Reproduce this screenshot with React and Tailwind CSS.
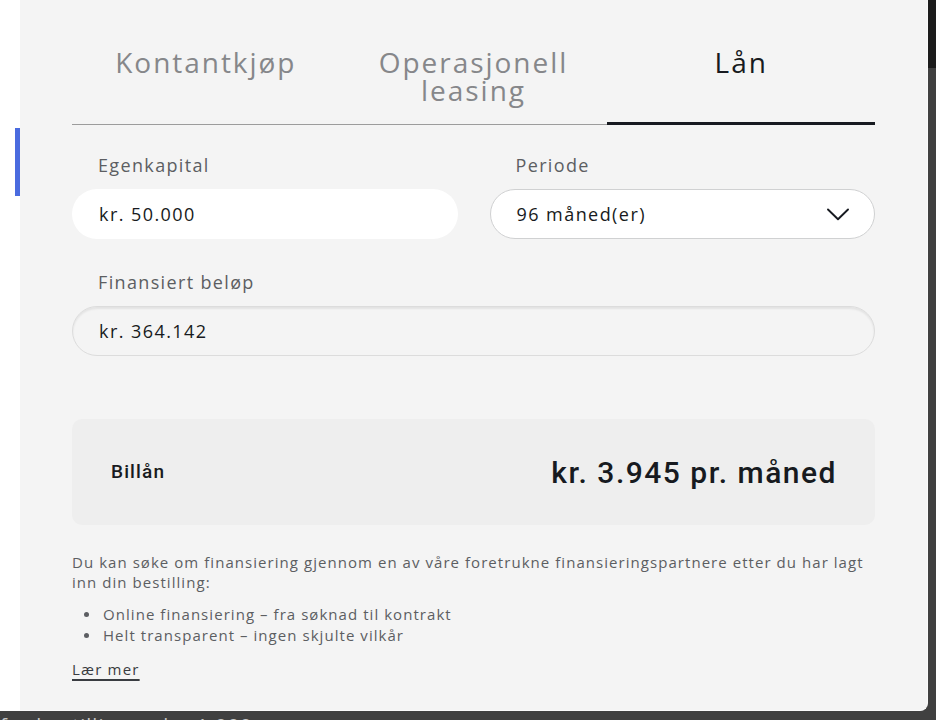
const font = { fontFamily: '"Open Sans", "Liberation Sans", sans-serif' }

function Tab({ children, active }) {
  if (active) {
    return (
      <div className="flex-1 h-[77px] -mb-px border-b-[3px] border-[#171a20] text-center text-[28px] leading-[28px] font-medium tracking-[0.07em] text-[#171a20]">
        {children}
      </div>
    )
  }
  return (
    <div className="flex-1 h-[76px] text-center text-[28px] leading-[28px] font-medium tracking-[0.07em] text-[#86878a]">
      {children}
    </div>
  )
}

function Field({ label, children, className = '' }) {
  return (
    <div className={`flex flex-col ${className}`}>
      <div className="pl-[26px] text-[18px] leading-[24px] font-medium tracking-[0.075em] text-[#5c5e62] mb-3">{label}</div>
      {children}
    </div>
  )
}

function Chevron() {
  return (
    <svg width="22" height="13" viewBox="0 0 22 13" fill="none">
      <path d="M1 1.5 L11 11.2 L21 1.5" stroke="#171a20" strokeWidth="1.9" strokeLinecap="round" strokeLinejoin="round" />
    </svg>
  )
}

export default function App() {
  return (
    <div className="w-[936px] h-[720px] bg-[#404040] flex flex-col overflow-hidden" style={font}>
      <div className="flex h-[711px]">
        {/* venstre kant av siden bak */}
        <div className="w-[20px] bg-white flex flex-col items-end">
          <div className="mt-[128px] w-[5px] h-[68px] bg-[#4a6bdf]" />
        </div>

        {/* modal */}
        <div className="w-[908px] h-[711px] bg-[#f4f4f4] rounded-br-lg border-b border-r border-[#fafafa] px-[52px] pt-[48px]">
          <div className="flex items-start border-b border-[#9c9c9c]">
            <Tab>Kontantkjøp</Tab>
            <Tab>Operasjonell<br />leasing</Tab>
            <Tab active>Lån</Tab>
          </div>

          <div className="flex gap-8 mt-[28px]">
            <Field label="Egenkapital" className="flex-1">
              <div className="h-[50px] rounded-full bg-white flex items-center px-[27px] text-[18px] font-medium tracking-[0.08em] text-[#171a20]">
                kr. 50.000
              </div>
            </Field>
            <Field label="Periode" className="flex-1">
              <div className="h-[50px] rounded-full bg-white border border-[#d0d1d2] flex items-center justify-between pl-[26px] pr-[25px] text-[18px] font-medium tracking-[0.08em] text-[#171a20]">
                <span>96 måned(er)</span>
                <Chevron />
              </div>
            </Field>
          </div>

          <Field label="Finansiert beløp" className="mt-[31px]">
            <div className="h-[50px] rounded-full bg-[#f4f4f4] border border-[#dcdcdc] shadow-[inset_0_2px_2px_rgba(0,0,0,0.07)] flex items-center px-[26px] text-[18px] font-medium tracking-[0.08em] text-[#171a20]">
              kr. 364.142
            </div>
          </Field>

          <div className="mt-[63px] h-[106px] rounded-[10px] bg-[#eeeeee] flex items-center justify-between pl-[39px] pr-[38px]" style={{ fontFamily: 'Roboto, "Liberation Sans", sans-serif' }}>
            <span className="text-[19px] font-medium tracking-[0.06em] text-[#171a20]">Billån</span>
            <span className="text-[30px] font-medium tracking-[0.05em] text-[#171a20]">kr. 3.945 pr. måned</span>
          </div>

          <p className="mt-[27px] text-[15px] leading-[20px] tracking-[0.07em] text-[#5c5e62]">
            Du kan søke om finansiering gjennom en av våre foretrukne finansieringspartnere etter du har lagt<br />
            inn din bestilling:
          </p>
          <ul className="mt-3 text-[15px] leading-[21px] tracking-[0.07em] text-[#5c5e62]">
            <li className="flex items-center">
              <span className="ml-[12px] mr-[14px] w-[5px] h-[5px] rounded-full bg-[#5c5e62]" />
              Online finansiering – fra søknad til kontrakt
            </li>
            <li className="flex items-center">
              <span className="ml-[12px] mr-[14px] w-[5px] h-[5px] rounded-full bg-[#5c5e62]" />
              Helt transparent – ingen skjulte vilkår
            </li>
          </ul>
          <a className="inline-block mt-[13px] text-[15px] leading-[20px] tracking-[0.08em] text-[#393c41] underline decoration-2 underline-offset-4">
            Lær mer
          </a>
        </div>

        {/* høyre kant */}
        <div className="w-[8px] flex flex-col">
          <div className="h-[68px] bg-[#1c1c1c]" />
          <div className="flex-1 bg-[#404040]" />
        </div>
      </div>

      {/* siden bak, nederst */}
      <div className="h-[9px] overflow-hidden">
        <div className="mt-[4px] text-[20px] leading-[22px] tracking-[0.05em] text-[#c4c4c4] whitespace-nowrap">
          for bestilling er kr. 1.000
        </div>
      </div>
    </div>
  )
}
